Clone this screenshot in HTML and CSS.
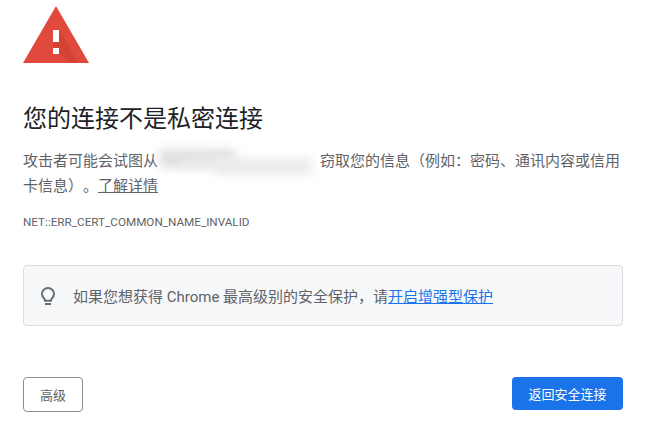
FILE: index.html
```html
<!DOCTYPE html>
<html>
<head lang="zh-CN">
    <meta charset="UTF-8">
    <link rel="stylesheet" href="styles.css">
    <title>隐私设置错误</title>
</head>
<body>
<div class="page">
    <svg class="warnIcon" width="66" height="57" viewBox="0 0 66 57">
        <path d="M33 0L66 57H0Z" fill="#df4a3c"/>
        <path d="M36 24L50 48L55 57L47 57L30 41L30 36Z" fill="#c5392c" opacity="0.45"/>
        <rect x="30" y="24" width="6" height="12" fill="#fff"/>
        <rect x="30" y="42" width="6" height="6" fill="#fff"/>
    </svg>

    <h1 class="title">您的连接不是私密连接</h1>

    <p class="message">攻击者可能会试图从<span class="hidden"><i class="smear smear1"></i><i class="smear smear2"></i><i class="smear smear3"></i></span>窃取您的信息（例如：密码、通讯内容或信用卡信息）。<a class="learn" href="#">了解详情</a></p>

    <div class="code">NET::ERR_CERT_COMMON_NAME_INVALID</div>

    <div class="hint">
        <svg class="bulb" width="18" height="20" viewBox="0 0 18 20" fill="none" stroke="#6a6d71" stroke-width="2">
            <path d="M9 2a6 6 0 0 0-6 6c0 2.300 1.200 3.700 2.300 4.800c.6.600.7 1.200.7 1.900h6c0-.7.100-1.300.7-1.900c1.100-1.100 2.300-2.500 2.300-4.800a6 6 0 0 0-6-6z"/>
            <path d="M6 18h6"/>
        </svg>
        <span>如果您想获得 Chrome 最高级别的安全保护，请<a class="enhance" href="#">开启增强型保护</a></span>
    </div>

    <div class="buttons">
        <button class="btnAdvanced">高级</button>
        <button class="btnBack">返回安全连接</button>
    </div>
</div>
</body>
</html>
```

FILE: styles.css
```css
body {
    margin: 0;
    background: #fff;
    font-family: "Roboto", "Noto Sans CJK SC", sans-serif;
    color: #5f6368;
    text-spacing-trim: space-all;
}
.page {
    width: 600px;
    padding: 6px 0 0 23px;
}
.warnIcon {
    display: block;
}
.title {
    font-size: 24px;
    font-weight: 400;
    line-height: 32px;
    color: #202124;
    margin: 40px 0 0 0;
}
.message {
    font-size: 15px;
    line-height: 25px;
    margin: 14px 0 0 0;
}
.hidden {
    display: inline-block;
    position: relative;
    width: 162px;
    height: 20px;
    vertical-align: middle;
}
.smear {
    position: absolute;
    background: #e0e0e0;
    filter: blur(5px);
}
.smear1 { left: 2px; top: -3px; width: 74px; height: 19px; }
.smear2 { left: 58px; top: 6px; width: 96px; height: 17px; background: #ececec; }
.smear3 { left: 25px; top: 8px; width: 50px; height: 7px; background: #efefef; }
.learn {
    color: #5f6368;
    text-decoration: underline;
}
.code {
    font-size: 11.7px;
    line-height: 16px;
    margin-top: 15px;
}
.hint {
    display: flex;
    align-items: center;
    gap: 16px;
    box-sizing: border-box;
    height: 61px;
    margin-top: 35px;
    padding-left: 15px;
    background: #f7f8fa;
    border: 1px solid #dadce0;
    border-radius: 4px;
    font-size: 15px;
}
.bulb {
    flex: none;
}
.enhance {
    color: #1a73e8;
    text-decoration: underline;
}
.buttons {
    display: flex;
    justify-content: space-between;
    align-items: flex-start;
    margin-top: 51px;
}
button {
    font-family: inherit;
    font-size: 13px;
    border-radius: 4px;
    padding: 0;
    cursor: pointer;
}
.btnAdvanced {
    width: 60px;
    height: 35px;
    background: #fff;
    border: 1px solid #8a8d91;
    color: #5f6368;
}
.btnBack {
    width: 111px;
    height: 33px;
    background: #1a73e8;
    border: 0;
    color: #fff;
}
```
